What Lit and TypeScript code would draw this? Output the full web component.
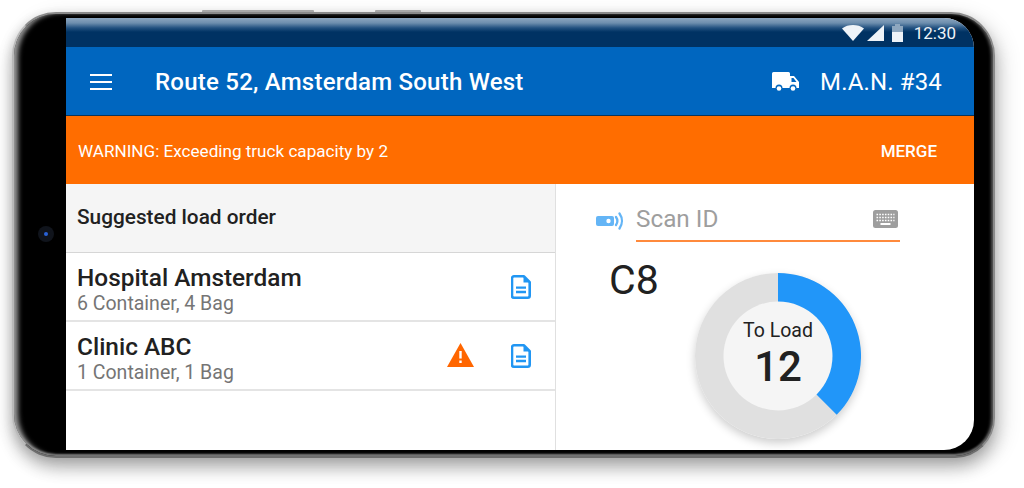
import { LitElement, html, css, svg } from "lit";
import { customElement } from "lit/decorators.js";

const docIcon = svg`<svg class="doc" width="20" height="24" viewBox="0 0 20 24"><path d="M3 1.300h10l5.700 5.900v13.500a2 2 0 0 1-2 2H3a2 2 0 0 1-2-2V3.300a2 2 0 0 1 2-2z" fill="none" stroke="#2196f3" stroke-width="2.600" stroke-linejoin="round"/><path d="M12.500 1.500l6 6h-6z" fill="#2196f3"/><path d="M5 12.600h10M5 17h10" stroke="#2196f3" stroke-width="2.400"/></svg>`;

@customElement("app-root")
export class AppRoot extends LitElement {
  static styles = css`
    :host { display: block; width: 1024px; height: 488px; background: #fff; overflow: hidden; font-family: Roboto, "Liberation Sans", sans-serif; position: relative; }
    .stage { padding: 12px 29px 30px 12px; height: 488px; box-sizing: border-box; }
    .phone { position: relative; box-sizing: border-box; height: 446px; border-radius: 44px 44px 40px 44px; background: #000; border: 2px solid #8a8a8a; border-bottom-color: #6e6e6e; border-left-color: #b9b9b9; padding: 4px 19px 6px 52px; box-shadow: 0 10px 16px rgba(0,0,0,.24), 6px 6px 22px rgba(0,0,0,.14), -2px 2px 10px rgba(0,0,0,.08), inset 6px 0 5px -2px #9a9a9a, inset -3px 0 3px -1px #555, inset 0 -2px 2px #777; }
    .btn { position: absolute; top: -4px; height: 2px; background: #a8a8a8; border-radius: 1px 1px 0 0; }
    .b1 { left: 188px; width: 112px; }
    .b2 { left: 361px; width: 46px; }
    .cam { position: absolute; left: 24px; top: 212px; width: 16px; height: 16px; border-radius: 50%; background: #10141c; display: flex; align-items: center; justify-content: center; }
    .cam i { width: 4px; height: 4px; border-radius: 50%; background: #2a62d8; }
    .screen { height: 100%; border-radius: 0 30px 30px 0; overflow: hidden; background: #fff; display: flex; flex-direction: column; }
    .status { height: 29px; flex: none; background: linear-gradient(#8da6bf 0, #6d8eae 5px, #21507f 10px, #003263 14px, #003263 100%); display: flex; align-items: center; justify-content: flex-end; padding-right: 18px; color: #eef3f8; font-size: 17px; padding-top: 1px; box-sizing: border-box; }
    .status svg { display: block; }
    .wifi { margin-right: 3px; }
    .signal { margin-right: 8px; }
    .batt { margin-right: 11px; }
    .appbar { height: 69px; flex: none; box-sizing: border-box; padding-top: 2px; background: #0066bf; color: #fff; display: flex; align-items: center; font-size: 24px; border-bottom: 1px solid #0d3558; }
    .menu { margin-left: 24px; margin-right: 43px; display: block; }
    .title { flex: 1; font-weight: 500; letter-spacing: .23px; }
    .truck { margin-right: 21px; display: block; }
    .man { margin-right: 32px; letter-spacing: .15px; }
    .warn { height: 68px; flex: none; box-sizing: border-box; padding: 1px 37px 0 12px; background: #ff6d00; color: #fff; display: flex; align-items: center; justify-content: space-between; font-size: 17.100px; }
    .warn b { font-weight: 500; font-size: 17px; }
    .content { flex: 1; display: flex; min-height: 0; }
    .left { width: 489px; flex: none; border-right: 1px solid #e0e0e0; }
    .head { height: 69px; box-sizing: border-box; background: #f5f5f5; border-bottom: 1px solid #d6d6d6; font-size: 20.800px; font-weight: 500; color: #212121; padding: 20px 0 0 11px; line-height: 26px; }
    .row { height: 69px; box-sizing: border-box; border-bottom: 2px solid #e4e4e4; display: flex; align-items: center; padding: 0 24px 0 11px; }
    .txt { flex: 1; padding-top: 7px; }
    .name { font-size: 24.400px; font-weight: 500; color: #212121; line-height: 26px; }
    .sub { font-size: 19.500px; color: #757575; line-height: 24px; margin-top: 1px; }
    .tri { margin: 0 37px 2px 0; display: block; }
    .doc { display: block; }
    .right { flex: 1; padding: 16px 74px 0 40px; }
    .scan { display: flex; align-items: center; height: 42px; }
    .nfc { margin-right: 12px; display: block; }
    .field { flex: 1; height: 42px; box-sizing: border-box; border-bottom: 2px solid #ff8a3c; display: flex; align-items: center; justify-content: space-between; font-size: 24.300px; color: #9e9e9e; padding-bottom: 3px; }
    .kbd { display: block; margin-right: 2px; }
    .lower { display: flex; margin-top: 18px; }
    .code { font-size: 41px; line-height: 40px; color: #212121; margin-left: 13px; width: 86px; }
    .donut { position: relative; margin-top: 13px; width: 166px; height: 166px; border-radius: 50%; box-shadow: 0 4px 10px rgba(0,0,0,.2); }
    .donut svg { display: block; }
    .center { position: absolute; inset: 0; display: flex; flex-direction: column; align-items: center; justify-content: center; color: #212121; padding-bottom: 3px; box-sizing: border-box; }
    .center span { font-size: 19.500px; line-height: 24px; }
    .center strong { font-size: 42px; font-weight: 500; line-height: 48px; }
  `;

  render() {
    return html`<div class="stage"><div class="phone">
      <div class="btn b1"></div><div class="btn b2"></div>
      <div class="cam"><i></i></div>
      <div class="screen">
        <div class="status">
          <svg class="wifi" width="22" height="16" viewBox="0 0 22 16"><path d="M11 16L0 3.500C3 1 7 0 11 0s8 1 11 3.500z" fill="#eef3f8"/></svg>
          <svg class="signal" width="17" height="16" viewBox="0 0 17 16"><path d="M0 16L17 0v16z" fill="#eef3f8"/></svg>
          <svg class="batt" width="11" height="18" viewBox="0 0 11 18"><path d="M3 0h5v2h3v6H0V2h3z" fill="#8ea7bf"/><path d="M0 8h11v10H0z" fill="#eef3f8"/></svg>
          <span>12:30</span>
        </div>
        <div class="appbar">
          <svg class="menu" width="22" height="16" viewBox="0 0 22 16"><path d="M0 1h22M0 8h22M0 15h22" stroke="#fff" stroke-width="2"/></svg>
          <div class="title">Route 52, Amsterdam South West</div>
          <svg class="truck" width="27" height="20" viewBox="0 0 27 20"><path d="M1.500 0h15a1.500 1.500 0 0 1 1.500 1.500V4h4l5 6v6h-2.500a3.500 3.500 0 0 0-7 0H10.500a3.500 3.500 0 0 0-7 0H0V1.500A1.500 1.500 0 0 1 1.500 0z" fill="#fff"/><path d="M19.500 6v4h5l-3-4z" fill="#0066bf"/><circle cx="7" cy="16.500" r="2.300" fill="#fff"/><circle cx="21" cy="16.500" r="2.300" fill="#fff"/></svg>
          <div class="man">M.A.N. #34</div>
        </div>
        <div class="warn"><span>WARNING: Exceeding truck capacity by 2</span><b>MERGE</b></div>
        <div class="content">
          <div class="left">
            <div class="head">Suggested load order</div>
            <div class="row">
              <div class="txt"><div class="name">Hospital Amsterdam</div><div class="sub">6 Container, 4 Bag</div></div>
              ${docIcon}
            </div>
            <div class="row">
              <div class="txt"><div class="name">Clinic ABC</div><div class="sub">1 Container, 1 Bag</div></div>
              <svg class="tri" width="27" height="24" viewBox="0 0 27 24"><path d="M13.500 0L27 24H0z" fill="#ff6600"/><path d="M12.300 8h2.400v7.500h-2.400zM12.300 17.500h2.400V20h-2.400z" fill="#fff"/></svg>
              ${docIcon}
            </div>
          </div>
          <div class="right">
            <div class="scan">
              <svg class="nfc" width="28" height="18" viewBox="0 0 28 18"><rect x="0" y="4" width="18" height="10" rx="2" fill="#64b5f6"/><circle cx="12.500" cy="9" r="2.200" fill="#fff"/><path d="M20 5A7 7 0 0 1 20 13M23.500 1.500A13 13 0 0 1 23.500 16.500" fill="none" stroke="#64b5f6" stroke-width="2.300" stroke-linecap="round"/></svg>
              <div class="field"><span>Scan ID</span>
                <svg class="kbd" width="25" height="18" viewBox="0 0 25 18"><rect width="25" height="18" rx="2.500" fill="#9e9e9e"/><path d="M3.500 4.500h18M3.500 7.500h18M3.500 10.500h18" stroke="#fff" stroke-width="1.600" stroke-dasharray="1.600 1.200"/><path d="M7.500 14h10" stroke="#fff" stroke-width="1.800"/></svg>
              </div>
            </div>
            <div class="lower">
              <div class="code">C8</div>
              <div class="donut">
                <svg width="166" height="166" viewBox="0 0 166 166">
                  <circle cx="83" cy="83" r="83" fill="#e0e0e0"/>
                  <path d="M83 0A83 83 0 0 1 141.700 141.700L83 83z" fill="#2196f9"/>
                  <circle cx="83" cy="83" r="54.500" fill="#f5f5f5"/>
                </svg>
                <div class="center"><span>To Load</span><strong>12</strong></div>
              </div>
            </div>
          </div>
        </div>
      </div>
    </div></div>`;
  }
}
